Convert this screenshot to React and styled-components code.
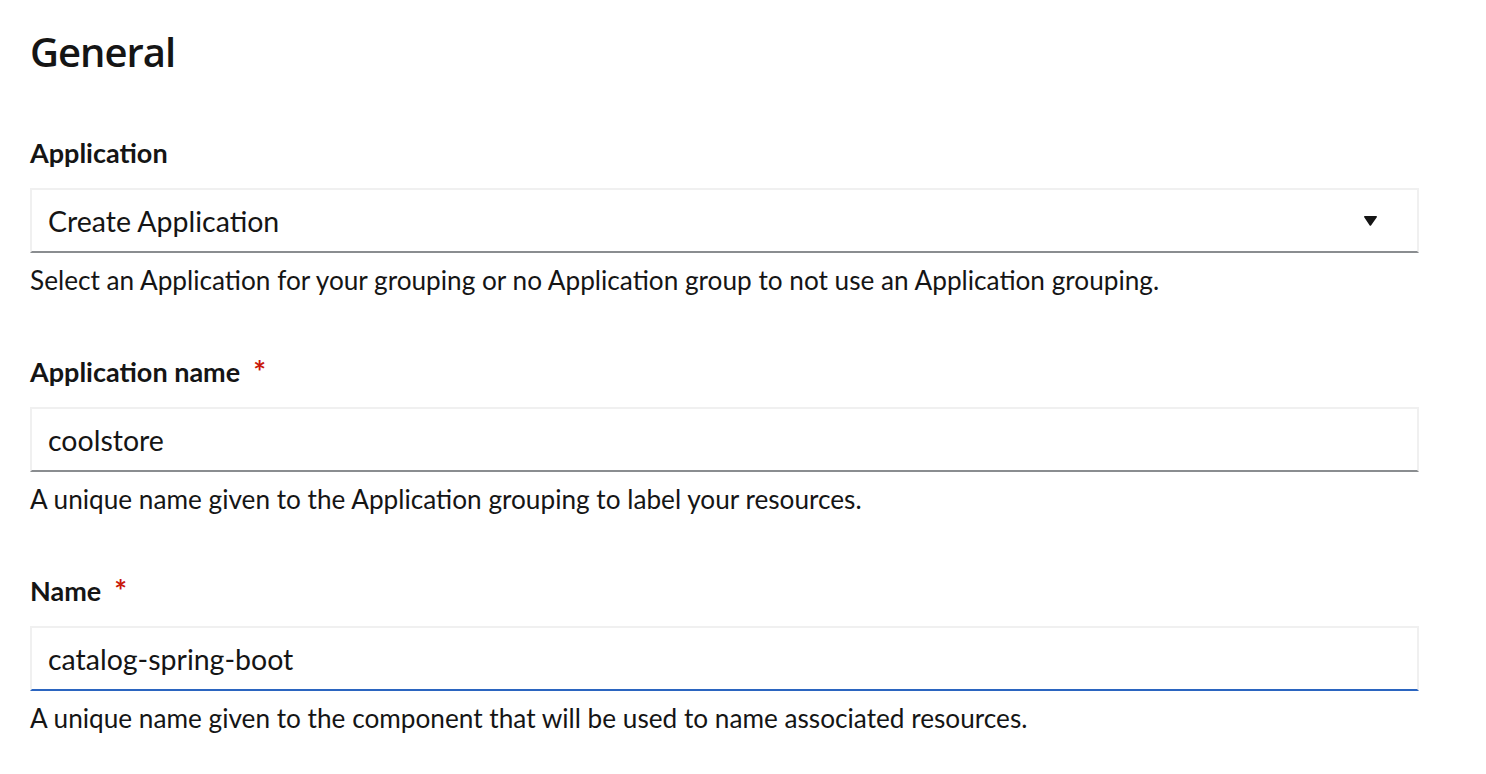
import React from 'react';
import styled, { createGlobalStyle } from 'styled-components';

const GlobalStyle = createGlobalStyle`
    body {
        margin: 0;
        background: #fff;
        font-family: 'Lato', 'Open Sans', sans-serif;
        color: #151515;
    }
`;

const Page = styled.div`
    padding: 28px 67px 0 30px;
`;

const Title = styled.h1`
    font-family: 'Open Sans', sans-serif;
    font-weight: 600;
    font-size: 40px;
    line-height: 48px;
    margin: 0 0 61px;
    letter-spacing: -1px;
`;

const Group = styled.div`
    display: flex;
    flex-direction: column;
    margin-bottom: 60px;

    &:last-child {
        margin-bottom: 0;
    }
`;

const Label = styled.label`
    display: flex;
    align-items: flex-start;
    gap: 13px;
    font-size: 27px;
    font-weight: 700;
    line-height: 32px;
    margin-bottom: 19px;
`;

const Required = styled.span`
    color: #c9190b;
    font-size: 30px;
    font-weight: 700;
    line-height: 30px;
`;

const Field = styled.div`
    display: flex;
    align-items: center;
    height: 65px;
    box-sizing: border-box;
    padding: 0 40px 0 16px;
    border: 2px solid #f0f0f0;
    border-bottom: 2px solid ${p => (p.$active ? '#2b65c0' : '#8a8d90')};
    font-size: 28.5px;
`;

const Value = styled.span`
    flex: 1;
`;

const Helper = styled.div`
    font-size: 26.2px;
    line-height: 32px;
    margin-top: 11px;
`;

const Caret = () => (
    <svg width="13" height="10" viewBox="0 0 13 10">
        <path d="M0.8 0h11.4c0.7 0 1 0.8 0.6 1.3L7 9.4c-0.3 0.4-1 0.4-1.3 0L0.2 1.3C-0.2 0.8 0.1 0 0.8 0z" fill="#151515" />
    </svg>
);

const FormGroup = ({ label, required, value, helper, select, active }) => (
    <Group>
        <Label>
            {label}
            {required && <Required>*</Required>}
        </Label>
        <Field $active={active}>
            <Value>{value}</Value>
            {select && <Caret />}
        </Field>
        <Helper>{helper}</Helper>
    </Group>
);

export default function App() {
    return (
        <Page>
            <GlobalStyle />
            <Title>General</Title>
            <FormGroup
                label="Application"
                value="Create Application"
                helper="Select an Application for your grouping or no Application group to not use an Application grouping."
                select
            />
            <FormGroup
                label="Application name"
                required
                value="coolstore"
                helper="A unique name given to the Application grouping to label your resources."
            />
            <FormGroup
                label="Name"
                required
                value="catalog-spring-boot"
                helper="A unique name given to the component that will be used to name associated resources."
                active
            />
        </Page>
    );
}
